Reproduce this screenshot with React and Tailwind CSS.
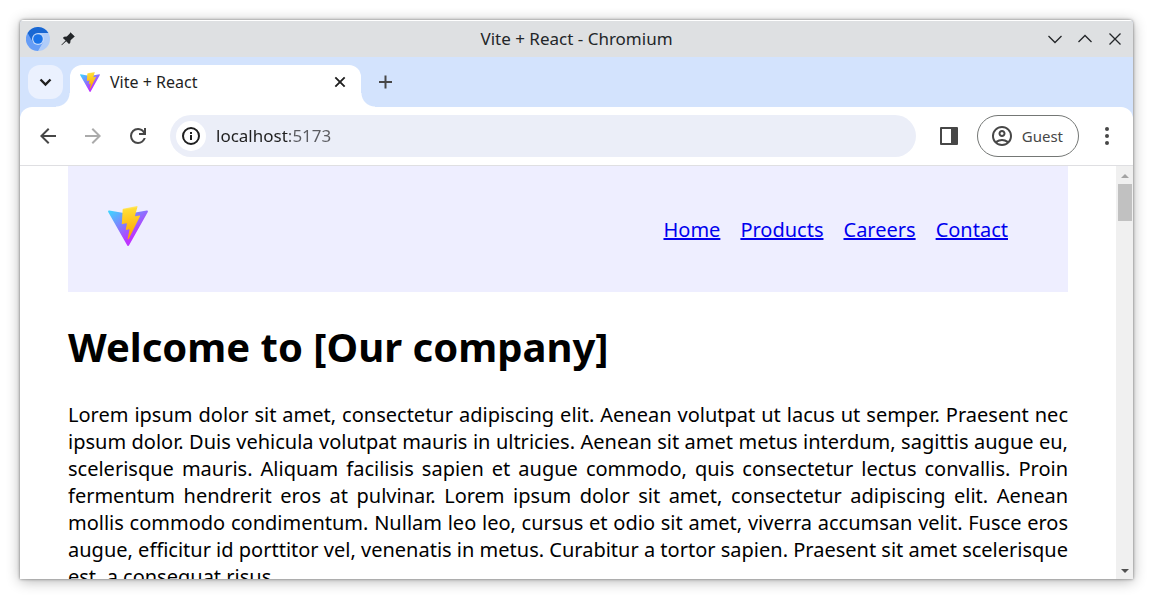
import { useId } from "react";

function ViteLogo({ className }) {
  const id = useId();
  return (
    <svg viewBox="0 0 256 257" className={className} role="img" aria-label="Vite">
      <defs>
        <linearGradient id={id + "a"} x1="-.828%" x2="57.636%" y1="7.652%" y2="78.411%">
          <stop offset="0%" stopColor="#41D1FF" />
          <stop offset="100%" stopColor="#BD34FE" />
        </linearGradient>
        <linearGradient id={id + "b"} x1="43.376%" x2="50.316%" y1="2.242%" y2="89.03%">
          <stop offset="0%" stopColor="#FFEA83" />
          <stop offset="8.333%" stopColor="#FFDD35" />
          <stop offset="100%" stopColor="#FFA800" />
        </linearGradient>
      </defs>
      <path
        fill={`url(#${id}a)`}
        d="M255.153 37.938L134.897 252.976c-2.483 4.44-8.862 4.466-11.382.048L.875 37.958c-2.746-4.814 1.371-10.646 6.827-9.67l120.385 21.517a6.537 6.537 0 0 0 2.322-.004l117.867-21.483c5.438-.991 9.574 4.796 6.877 9.62Z"
      />
      <path
        fill={`url(#${id}b)`}
        d="M185.432.063L96.44 17.501a3.268 3.268 0 0 0-2.634 3.014l-5.474 92.456a3.268 3.268 0 0 0 3.997 3.378l24.777-5.718c2.318-.535 4.413 1.507 3.936 3.838l-7.361 36.047c-.495 2.426 1.782 4.5 4.151 3.78l15.304-4.649c2.372-.72 4.652 1.36 4.15 3.788l-11.698 56.621c-.732 3.542 3.979 5.473 5.943 2.437l1.313-2.028l72.516-144.72c1.215-2.423-.88-5.186-3.54-4.672l-25.505 4.922c-2.396.462-4.435-1.77-3.759-4.114l16.646-57.705c.677-2.35-1.37-4.583-3.769-4.113Z"
      />
    </svg>
  );
}

function ChromiumLogo() {
  return (
    <svg viewBox="0 0 24 24" className="size-6" aria-hidden="true">
      <circle cx="12" cy="12" r="12" fill="#afccf9" />
      <path d="M12 12 1.6 6A12 12 0 0 0 12 24l5.2-9z" fill="#669df6" />
      <path d="M1.6 6a12 12 0 0 1 20.8 0H12v6l-5.2 3z" fill="#1967d2" />
      <circle cx="12" cy="12" r="6" fill="#c5dafa" />
      <circle cx="12" cy="12" r="4.8" fill="#1a73e8" />
    </svg>
  );
}

function Line({ d, size = "size-6", width = 2 }) {
  return (
    <svg viewBox="0 0 24 24" className={size} fill="none" stroke="currentColor" strokeWidth={width} aria-hidden="true">
      <path d={d} />
    </svg>
  );
}

function Solid({ d }) {
  return (
    <svg viewBox="0 0 24 24" className="size-6" fill="currentColor" aria-hidden="true">
      <path d={d} />
    </svg>
  );
}

function TitleBar() {
  return (
    <header className="grid h-[37px] shrink-0 grid-cols-[1fr_auto_1fr] items-center border-t border-white bg-[#dee0e2] px-[6px] text-[#232629]">
      <div className="flex items-center gap-[10px]">
        <ChromiumLogo />
        <button aria-label="Pin window">
          <svg viewBox="0 0 16 16" className="size-4" fill="currentColor" aria-hidden="true">
            <path d="M10.4 1.2 14.8 5.6 13.6 6.4 10.6 9.2 10.2 12 9 13 6.2 10.2 1.8 14.2 1.4 13.8 5.6 9.6 2.9 6.9 4 5.8 6.8 5.4 9.8 2.4Z" />
          </svg>
        </button>
      </div>
      <h1 className="text-[17px] leading-6">Vite + React - Chromium</h1>
      <div className="flex items-center justify-end gap-[6px]">
        <button aria-label="Minimize"><Line d="M5.5 9 12 15.5 18.5 9" width={1.3} /></button>
        <button aria-label="Maximize"><Line d="M5.5 15 12 8.5 18.5 15" width={1.3} /></button>
        <button aria-label="Close window"><Line d="M6.5 6.5 17.5 17.5M17.5 6.5 6.5 17.5" width={1.3} /></button>
      </div>
    </header>
  );
}

function TabStrip() {
  return (
    <div className="flex h-[50px] shrink-0 items-end pl-2">
      <button aria-label="Search tabs" className="mb-2 grid h-[34px] w-[35px] place-items-center rounded-xl bg-[#ebf1fe] text-[#1f1f1f]">
        <Line d="M6.5 9.5 11.5 14.5 16.5 9.5" width={2.4} />
      </button>
      <div className="-ml-[7px] size-[14px] bg-[radial-gradient(circle_at_0_0,transparent_13px,white_14px)]" />
      <div className="flex h-[42px] w-[291px] items-center rounded-t-xl bg-white pr-[13px] pb-2 pl-[10px] text-[#1f1f1f]">
        <ViteLogo className="size-5" />
        <span className="ml-[10px] flex-1 text-base">Vite + React</span>
        <button aria-label="Close tab"><Line d="M5 5 19 19M19 5 5 19" size="size-4" width={2.8} /></button>
      </div>
      <div className="size-[14px] bg-[radial-gradient(circle_at_100%_0,transparent_13px,white_14px)]" />
      <button aria-label="New tab" className="mb-[13px] -ml-[2px] text-[#474747]">
        <Line d="M12.5 5.5V18.5M6 12H19" />
      </button>
    </div>
  );
}

function Toolbar() {
  return (
    <div className="flex h-[59px] shrink-0 items-center rounded-t-xl border-b border-[#dfdfe2] bg-white pr-[14px] pl-4 text-[#474747]">
      <div className="flex gap-[21px]">
        <button aria-label="Back"><Solid d="m7.825 13 5.6 5.6L12 20l-8-8 8-8 1.425 1.4-5.6 5.6H20v2z" /></button>
        <button aria-label="Forward" className="text-[#ababab]"><Solid d="M16.175 13H4v-2h12.175l-5.6-5.6L12 4l8 8-8 8-1.425-1.4z" /></button>
        <button aria-label="Reload">
          <Solid d="M12 20q-3.35 0-5.675-2.325T4 12t2.325-5.675T12 4q1.725 0 3.3.713T18 6.75V4h2v7h-7V9h4.2q-.8-1.4-2.187-2.2T12 6Q9.5 6 7.75 7.75T6 12t1.75 4.25T12 18q1.925 0 3.475-1.1T17.65 14h2.1q-.7 2.65-2.85 4.325T12 20" />
        </button>
      </div>
      <div className="ml-5 flex h-[42px] min-w-0 flex-1 items-center rounded-full bg-[#ebeef8] pl-[6px]">
        <button aria-label="Site information" className="grid size-[30px] place-items-center rounded-full bg-white text-[#1f1f1f]">
          <Line d="M12 4A8 8 0 1 0 12 20A8 8 0 1 0 12 4M12 11V16M12 8V10" />
        </button>
        <input
          type="text"
          aria-label="Address"
          defaultValue="localhost:5173"
          className="ml-[10px] min-w-0 flex-1 bg-[linear-gradient(90deg,#1f1f1f_72px,#5a5b60_72px)] bg-clip-text text-[17px] text-transparent caret-black outline-none"
        />
      </div>
      <button aria-label="Side panel" className="ml-[21px]">
        <Solid d="M4 3H20Q21 3 21 4V20Q21 21 20 21H4Q3 21 3 20V4Q3 3 4 3ZM5 5V19H14V5Z" />
      </button>
      <button className="ml-4 flex h-[42px] items-center gap-2 rounded-full border border-[#747775] pr-[15px] pl-3 text-[15px]">
        <Solid d="M5.85 17.1q1.275-.975 2.85-1.537T12 15t3.3.563t2.85 1.537q.875-1.025 1.363-2.325T20 12q0-3.325-2.337-5.663T12 4T6.337 6.338T4 12q0 1.475.488 2.775T5.85 17.1M12 13q-1.475 0-2.488-1.012T8.5 9.5t1.013-2.488T12 6t2.488 1.013T15.5 9.5t-1.012 2.488T12 13m0 9q-2.075 0-3.9-.788t-3.175-2.137T2.788 15.9T2 12t.788-3.9t2.137-3.175T8.1 2.788T12 2t3.9.788t3.175 2.137T21.213 8.1T22 12t-.788 3.9t-2.137 3.175t-3.175 2.138T12 22m0-2q1.325 0 2.5-.387t2.15-1.113q-.975-.725-2.15-1.112T12 17t-2.5.388T7.35 18.5q.975.725 2.15 1.113T12 20m0-9q.65 0 1.075-.425T13.5 9.5t-.425-1.075T12 8t-1.075.425T10.5 9.5t.425 1.075T12 11" />
        Guest
      </button>
      <button aria-label="Menu" className="ml-4">
        <svg viewBox="0 0 24 24" className="size-6" fill="currentColor" aria-hidden="true">
          <circle cx="12" cy="5" r="2" /><circle cx="12" cy="12" r="2" /><circle cx="12" cy="19" r="2" />
        </svg>
      </button>
    </div>
  );
}

const links = ["Home", "Products", "Careers", "Contact"];

function Page() {
  return (
    <main className="min-w-0 flex-1 overflow-hidden px-12 text-[20px] leading-[27px] text-black">
      <header className="flex h-[126px] items-center justify-between bg-[#eeeeff] pr-[60px] pl-10">
        <ViteLogo className="mt-10 size-10 self-start" />
        <nav className="flex gap-5">
          {links.map((name) => (
            <a key={name} href="#" className="text-[#0000ee] underline">{name}</a>
          ))}
        </nav>
      </header>
      <h1 className="my-[27px] text-[40px] leading-[55px] font-bold">Welcome to [Our company]</h1>
      <p className="text-justify">
        Lorem ipsum dolor sit amet, consectetur adipiscing elit. Aenean volutpat ut lacus ut semper. Praesent nec ipsum dolor. Duis vehicula volutpat mauris in ultricies. Aenean sit amet metus interdum, sagittis augue eu, scelerisque mauris. Aliquam facilisis sapien et augue commodo, quis consectetur lectus convallis. Proin fermentum hendrerit eros at pulvinar. Lorem ipsum dolor sit amet, consectetur adipiscing elit. Aenean mollis commodo condimentum. Nullam leo leo, cursus et odio sit amet, viverra accumsan velit. Fusce eros augue, efficitur id porttitor vel, venenatis in metus. Curabitur a tortor sapien. Praesent sit amet scelerisque est, a consequat risus.
      </p>
    </main>
  );
}

function ScrollBar() {
  return (
    <div className="flex w-[17px] shrink-0 flex-col items-center bg-[#f0f0f0]" aria-hidden="true">
      <svg viewBox="0 0 17 18" className="h-[18px] w-[17px]"><path d="M5 12H13L9 8Z" fill="#a3a3a3" /></svg>
      <div className="h-[37px] w-[14px] bg-[#c1c1c1]" />
      <svg viewBox="0 0 17 17" className="mt-auto size-[17px]"><path d="M5 7H13L9 11Z" fill="#505050" /></svg>
    </div>
  );
}

export default function App() {
  return (
    <div className="flex h-screen bg-white p-5 font-['Noto_Sans',sans-serif]">
      <div className="flex min-w-0 flex-1 flex-col overflow-hidden rounded-t-[4px] bg-[#d3e3fd] shadow-[0_0_3px_rgba(0,0,0,0.5),0_2px_14px_rgba(0,0,0,0.3)]">
        <TitleBar />
        <TabStrip />
        <Toolbar />
        <div className="flex min-h-0 flex-1 bg-white">
          <Page />
          <ScrollBar />
        </div>
      </div>
    </div>
  );
}
